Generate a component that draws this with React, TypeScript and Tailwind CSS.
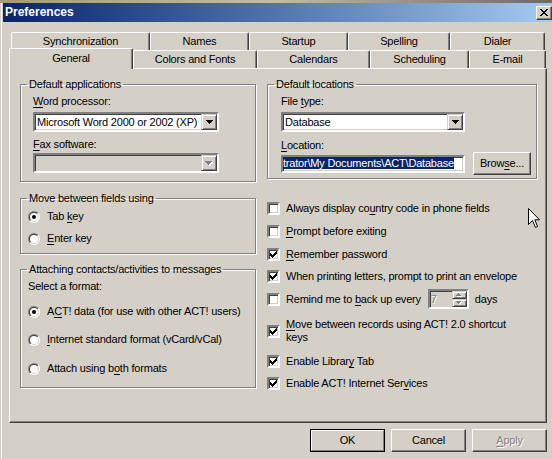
import { useId } from 'react';

const face = 'bg-[#d4d0c8]';
const sunken =
  'border-2 border-t-[#808080] border-l-[#808080] border-b-white border-r-white shadow-[inset_1px_1px_0_#404040,inset_-1px_-1px_0_#d4d0c8]';
const raised =
  'border border-t-white border-l-white border-b-[#404040] border-r-[#404040] shadow-[inset_-1px_-1px_0_#808080]';
const raisedInner =
  'border border-t-[#d4d0c8] border-l-[#d4d0c8] border-b-[#404040] border-r-[#404040] shadow-[inset_1px_1px_0_#fff,inset_-1px_-1px_0_#808080]';
const etched = 'border border-[#808080] shadow-[inset_1px_1px_0_#fff,1px_1px_0_#fff]';
const grayText = 'text-[#808080] [text-shadow:1px_1px_0_#fff]';

function U({ children }: { children: string }) {
  return <span className="underline decoration-1 underline-offset-[2px]">{children}</span>;
}

function Arrow({ gray }: { gray?: boolean }) {
  const d = 'M0 0h7v1h-1v1h-1v1h-1v1h-1v-1h-1v-1h-1v-1h-1z';
  return (
    <svg width={gray ? 8 : 7} height={gray ? 5 : 4} viewBox={gray ? '0 0 8 5' : '0 0 7 4'} shapeRendering="crispEdges" className="block">
      {gray && <path d={d} fill="#fff" transform="translate(1 1)" />}
      <path d={d} fill={gray ? '#808080' : '#000'} />
    </svg>
  );
}

function SpinArrow({ up }: { up?: boolean }) {
  const d = up ? 'M2 0h1v1h1v1h1v1h-5v-1h1v-1h1z' : 'M0 0h5v1h-1v1h-1v1h-1v-1h-1v-1h-1z';
  return (
    <svg width="6" height="4" viewBox="0 0 6 4" shapeRendering="crispEdges" className="block">
      <path d={d} fill="#fff" transform="translate(1 1)" />
      <path d={d} fill="#808080" />
    </svg>
  );
}

function Combo({ text, gray, className }: { text?: string; gray?: boolean; className: string }) {
  return (
    <div className={`${sunken} h-[20px] flex ${gray ? face : 'bg-white'} ${className}`}>
      <div className="flex-1 pl-[2px] flex items-center overflow-hidden whitespace-nowrap">{text}</div>
      <div className={`w-[16px] ${face} ${raisedInner} flex items-center justify-center`}>
        <Arrow gray={gray} />
      </div>
    </div>
  );
}

function Radio({ checked }: { checked?: boolean }) {
  const id = useId().replace(/[^a-zA-Z0-9]/g, '');
  return (
    <svg width="12" height="12" viewBox="0 0 12 12" className="block shrink-0">
      <defs>
        <linearGradient id={`${id}o`} x1="0" y1="0" x2="1" y2="1">
          <stop offset="0.5" stopColor="#808080" />
          <stop offset="0.5" stopColor="#ffffff" />
        </linearGradient>
        <linearGradient id={`${id}i`} x1="0" y1="0" x2="1" y2="1">
          <stop offset="0.5" stopColor="#404040" />
          <stop offset="0.5" stopColor="#d4d0c8" />
        </linearGradient>
      </defs>
      <circle cx="6" cy="6" r="6" fill={`url(#${id}o)`} />
      <circle cx="6" cy="6" r="5" fill={`url(#${id}i)`} />
      <circle cx="6" cy="6" r="4" fill="#fff" />
      {checked && <circle cx="6" cy="6" r="2" fill="#000" />}
    </svg>
  );
}

function Check({ checked }: { checked?: boolean }) {
  return (
    <div className={`w-[13px] h-[13px] shrink-0 bg-white ${sunken} flex items-center justify-center`}>
      {checked && (
        <svg width="7" height="7" viewBox="0 0 7 7" shapeRendering="crispEdges" className="block">
          <path d="M0 2h1v3h-1z M1 3h1v3h-1z M2 4h1v3h-1z M3 3h1v3h-1z M4 2h1v3h-1z M5 1h1v3h-1z M6 0h1v3h-1z" fill="#000" />
        </svg>
      )}
    </div>
  );
}

function RadioRow({ checked, children, className }: { checked?: boolean; children: React.ReactNode; className: string }) {
  return (
    <div className={`flex items-center gap-[7px] ml-[7px] ${className}`}>
      <Radio checked={checked} />
      <span>{children}</span>
    </div>
  );
}

function CheckRow({ checked, children, className }: { checked?: boolean; children: React.ReactNode; className: string }) {
  return (
    <div className={`flex items-center gap-[6px] ${className}`}>
      <Check checked={checked} />
      <div>{children}</div>
    </div>
  );
}

function Tab({ label, className }: { label: string; className: string }) {
  return (
    <div
      className={`h-[18px] ${face} border-t border-l border-r border-t-white border-l-white border-r-[#404040] shadow-[inset_-1px_0_0_#808080] rounded-t-[2px] flex items-center justify-center whitespace-nowrap ${className}`}
    >
      {label}
    </div>
  );
}

function Button({ children, isDefault, className }: { children: React.ReactNode; isDefault?: boolean; className: string }) {
  if (isDefault) {
    return (
      <div className={`border border-black h-[23px] ${className}`}>
        <div className="h-full border border-t-white border-l-white border-b-[#808080] border-r-[#808080] flex items-center justify-center">
          {children}
        </div>
      </div>
    );
  }
  return <div className={`${raised} h-[23px] flex items-center justify-center ${className}`}>{children}</div>;
}

function Legend({ children }: { children: React.ReactNode }) {
  return <legend className="ml-[6px] px-[2px] leading-[13px]">{children}</legend>;
}

export default function App() {
  return (
    <div className="relative w-[552px] h-[459px] overflow-hidden bg-[#d4d0c8] font-['Liberation_Sans',Arial,sans-serif] text-[11px] leading-[13px] tracking-[-0.2px] text-black select-none">
      <div className="h-[3px] bg-linear-to-r from-[#a89880] via-[#c8baa2] to-[#6f6a66]" />
      <div className="ml-[1px] border-l border-white h-[456px] flex flex-col">
        {/* title bar */}
        <div className="ml-[1px] h-[19px] bg-linear-to-r from-[#0a246a] to-[#a6caf0] flex items-center justify-between pl-[2px]">
          <span className="text-white font-bold text-[12px] tracking-normal">Preferences</span>
          <div className={`w-[16px] h-[14px] ${face} ${raised} flex items-center justify-center`}>
            <svg width="8" height="7" viewBox="0 0 8 7" shapeRendering="crispEdges" className="block">
              <path
                d="M0 0h2v1h-2z M6 0h2v1h-2z M1 1h2v1h-2z M5 1h2v1h-2z M2 2h4v1h-4z M3 3h2v1h-2z M2 4h4v1h-4z M1 5h2v1h-2z M5 5h2v1h-2z M0 6h2v1h-2z M6 6h2v1h-2z"
                fill="#000"
              />
            </svg>
          </div>
        </div>

        {/* tabs */}
        <div className="mt-[10px] ml-[9px] flex">
          <Tab label="Synchronization" className="w-[139px]" />
          <Tab label="Names" className="w-[99px]" />
          <Tab label="Startup" className="w-[99px]" />
          <Tab label="Spelling" className="w-[102px]" />
          <Tab label="Dialer" className="w-[95px]" />
        </div>
        <div className="ml-[7px] flex items-start h-[18px]">
          <div className={`relative z-10 -mt-[2px] w-[124px] h-[21px] ${face} border-t border-l border-r border-t-white border-l-white border-r-[#404040] shadow-[inset_-1px_0_0_#808080] rounded-t-[2px] flex items-center justify-center pb-[2px]`}>
            General
          </div>
          <Tab label="Colors and Fonts" className="w-[124px]" />
          <Tab label="Calendars" className="w-[113px]" />
          <Tab label="Scheduling" className="w-[99px]" />
          <Tab label="E-mail" className="w-[77px]" />
        </div>

        {/* panel */}
        <div className={`ml-[7px] w-[538px] h-[355px] ${raised} flex pl-[10px] gap-[11px]`}>
          <div className="w-[236px] flex flex-col">
            <fieldset className={`mt-[9px] h-[104px] min-w-0 ${etched}`}>
              <Legend>Default applications</Legend>
              <div className="ml-[12px] mt-[4px]">
                <U>W</U>ord processor:
              </div>
              <Combo text="Microsoft Word 2000 or 2002 (XP)" className="ml-[12px] mt-[4px] w-[186px]" />
              <div className="ml-[12px] mt-[6px]">
                <U>F</U>ax software:
              </div>
              <Combo gray className="ml-[12px] mt-[2px] w-[186px]" />
            </fieldset>

            <fieldset className={`mt-[10px] h-[62px] min-w-0 ${etched}`}>
              <Legend>Move between fields using</Legend>
              <RadioRow checked className="mt-[5px]">
                Tab <U>k</U>ey
              </RadioRow>
              <RadioRow className="mt-[9px]">
                <U>E</U>nter key
              </RadioRow>
            </fieldset>

            <fieldset className={`mt-[9px] h-[125px] min-w-0 ${etched}`}>
              <Legend>Attaching contacts/activities to messages</Legend>
              <div className="ml-[7px] mt-[4px]">Select a format:</div>
              <RadioRow checked className="mt-[12px]">
                A<U>C</U>T! data (for use with other ACT! users)
              </RadioRow>
              <RadioRow className="mt-[15px]">
                <U>I</U>nternet standard format (vCard/vCal)
              </RadioRow>
              <RadioRow className="mt-[16px]">
                Attach using b<U>o</U>th formats
              </RadioRow>
            </fieldset>
          </div>

          <div className="w-[270px] flex flex-col">
            <fieldset className={`mt-[9px] h-[101px] min-w-0 ${etched}`}>
              <Legend>Default locations</Legend>
              <div className="ml-[13px] mt-[4px]">
                File <U>t</U>ype:
              </div>
              <Combo text="Database" className="ml-[13px] mt-[4px] w-[184px]" />
              <div className="ml-[13px] mt-[7px]">
                <U>L</U>ocation:
              </div>
              <div className="ml-[13px] flex items-start gap-[8px]">
                <div className={`mt-[3px] w-[184px] h-[18px] bg-white ${sunken} overflow-hidden whitespace-nowrap`}>
                  <span className="bg-[#0a246a] text-white">trator\My Documents\ACT\Database</span>
                </div>
                <Button className="w-[58px] h-[22px]">
                  Brow<U>s</U>e...
                </Button>
              </div>
            </fieldset>

            <CheckRow className="mt-[23px]">
              Always display co<U>u</U>ntry code in phone fields
            </CheckRow>
            <CheckRow className="mt-[10px]">
              <U>P</U>rompt before exiting
            </CheckRow>
            <CheckRow checked className="mt-[10px]">
              <U>R</U>emember password
            </CheckRow>
            <CheckRow checked className="mt-[9px]">
              When printing letters, prompt to print an envelope
            </CheckRow>
            <div className="mt-[6px] h-[20px] flex items-center">
              <Check />
              <span className="ml-[6px]">
                Remind me to <U>b</U>ack up every
              </span>
              <div className={`ml-[7px] w-[41px] h-[20px] ${sunken} ${face} flex`}>
                <div className={`flex-1 pl-[1px] leading-[16px] ${grayText}`}>7</div>
                <div className="w-[15px] flex flex-col">
                  <div className={`h-[8px] ${raisedInner} flex items-center justify-center`}>
                    <SpinArrow up />
                  </div>
                  <div className={`h-[8px] ${raisedInner} flex items-center justify-center`}>
                    <SpinArrow />
                  </div>
                </div>
              </div>
              <span className="ml-[6px]">days</span>
            </div>
            <CheckRow checked className="mt-[9px]">
              <U>M</U>ove between records using ACT! 2.0 shortcut
              <br />
              keys
            </CheckRow>
            <CheckRow checked className="mt-[11px]">
              Enable Librar<U>y</U> Tab
            </CheckRow>
            <CheckRow checked className="mt-[9px]">
              Enable ACT! Internet Ser<U>v</U>ices
            </CheckRow>
          </div>
        </div>

        {/* dialog buttons */}
        <div className="mt-[6px] flex justify-end gap-[6px] pr-[5px]">
          <Button isDefault className="w-[75px]">
            OK
          </Button>
          <Button className="w-[75px]">Cancel</Button>
          <Button className={`w-[75px] ${grayText}`}>
            <U>A</U>pply
          </Button>
        </div>
      </div>

      {/* mouse pointer */}
      <svg className="absolute left-[528px] top-[208px]" width="13" height="21" viewBox="0 0 13 21">
        <path d="M0.5 0.5V16.5L4.5 12.5L7.5 19.5L9.5 18.5L6.8 11.8H11.5Z" fill="#fff" stroke="#000" strokeWidth="1" />
      </svg>
    </div>
  );
}
